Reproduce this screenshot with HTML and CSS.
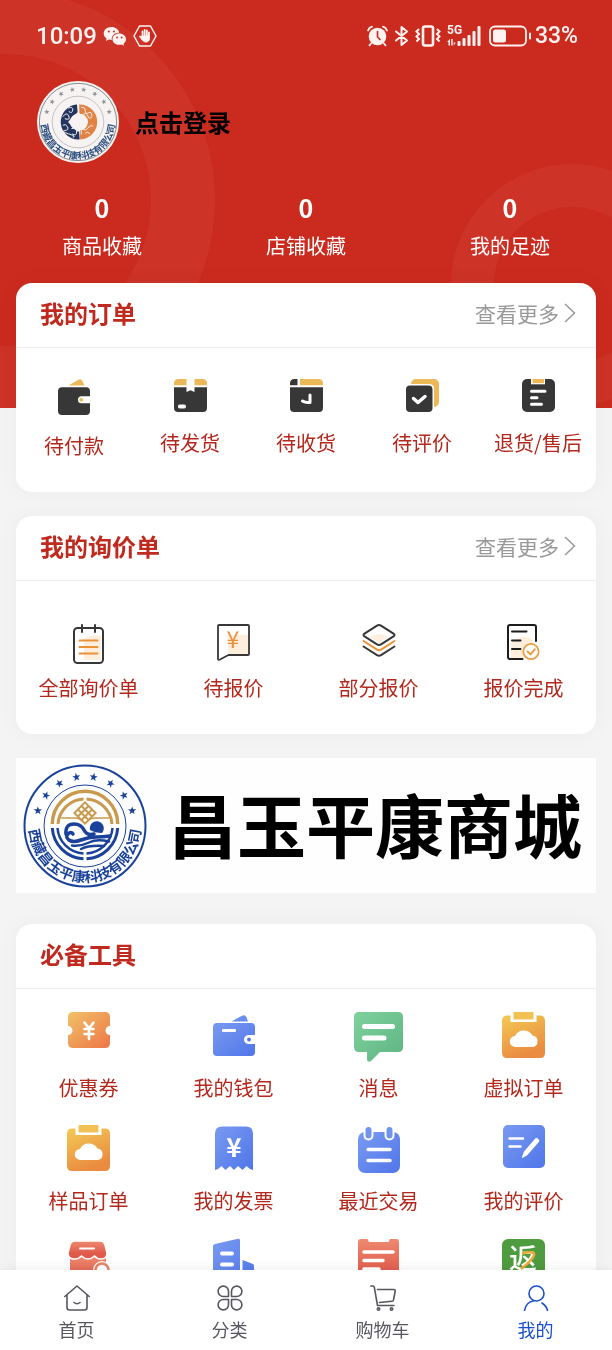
FILE: index.html
```html
<!DOCTYPE html>
<html lang="zh-CN">
<head>
    <meta charset="UTF-8">
    <meta name="viewport" content="width=device-width, initial-scale=1.0">
    <title>我的</title>
    <link rel="stylesheet" href="styles.css">
</head>
<body>
    <!-- Shared gradients and shapes -->
    <svg class="defs" aria-hidden="true">
        <defs>
            <linearGradient id="orange" x1="0" y1="0" x2="1" y2="1"><stop offset="0" stop-color="#f0c268"/><stop offset="1" stop-color="#ee7546"/></linearGradient>
            <linearGradient id="yellow" x1="0" y1="0" x2="0.4" y2="1"><stop offset="0" stop-color="#f3ca55"/><stop offset="1" stop-color="#ea8b40"/></linearGradient>
            <linearGradient id="blue" x1="0" y1="0" x2="1" y2="1"><stop offset="0" stop-color="#7a9af0"/><stop offset="1" stop-color="#4f76ea"/></linearGradient>
            <linearGradient id="green" x1="0" y1="0" x2="1" y2="1"><stop offset="0" stop-color="#7fd19c"/><stop offset="1" stop-color="#5db583"/></linearGradient>
            <linearGradient id="red" x1="0" y1="0" x2="0" y2="1"><stop offset="0" stop-color="#ee8a70"/><stop offset="0.7" stop-color="#e05a4c"/></linearGradient>
            <path id="seal-arc" d="M-56 0A56 56 0 0 0 56 0"/>
            <path id="star" d="M0-54L1-51 4-50.900 1.600-49 2.500-46 0-47.800-2.500-46-1.600-49-4-50.900-1-51Z"/>
            <g id="stars">
                <use href="#star" transform="rotate(-72)"/>
                <use href="#star" transform="rotate(-52)"/>
                <use href="#star" transform="rotate(-31)"/>
                <use href="#star" transform="rotate(-10)"/>
                <use href="#star" transform="rotate(10)"/>
                <use href="#star" transform="rotate(31)"/>
                <use href="#star" transform="rotate(52)"/>
                <use href="#star" transform="rotate(72)"/>
            </g>
        </defs>
    </svg>

    <main class="page">
        <div class="page-bg"></div>

        <div class="status-bar">
            <div class="status-left">
                <span>10:09</span>
                <svg width="24" height="20" viewBox="0 0 24 20">
                    <path fill="#fff3f1" d="M8.500 1C4 1 .7 3.900.7 7.500c0 2 1.100 3.800 2.900 5L3 15l2.800-1.500c1 .3 2 .4 3 .4-.5-4 2.700-7.300 7.400-7.200C15.600 3.300 12.300 1 8.500 1z"/>
                    <path fill="#fff3f1" d="M16.300 7.500c-3.900 0-6.800 2.500-6.800 5.700s3 5.600 6.800 5.600c.8 0 1.600-.1 2.300-.3l2.500 1.300-.6-2.100c1.500-1.100 2.500-2.700 2.500-4.500 0-3.200-3-5.700-6.700-5.700z"/>
                    <g fill="#cb2b1e"><circle cx="5.800" cy="5.500" r="1"/><circle cx="11" cy="5.500" r="1"/><circle cx="14" cy="11.500" r=".9"/><circle cx="18.600" cy="11.500" r=".9"/></g>
                </svg>
                <svg width="24" height="22" viewBox="0 0 24 22" fill="none" stroke="#fff3f1" stroke-linecap="round" stroke-linejoin="round">
                    <path stroke-width="1.500" d="M6.500 1h11L23 11l-5.500 10h-11L1 11z"/>
                    <path stroke-width="1.800" d="M9.500 12V6.500M11.700 11V5M13.900 11V5.500M16 12V7.500M9.500 14.500L7 11.500"/>
                    <path fill="#fff3f1" stroke-width="1" d="M9 11h7.500v2.500c0 2-1.300 3.500-3.500 3.500-2 0-3-1-4-2.500z"/>
                </svg>
            </div>
            <div class="status-right">
                <svg width="21" height="22" viewBox="0 0 21 22" fill="none" stroke="#fff3f1" stroke-linecap="round">
                    <circle cx="10.500" cy="11.500" r="8.800" fill="#fff3f1" stroke="none"/>
                    <path stroke-width="1.800" d="M1 5.500Q2 2.500 5 1.700M20 5.500Q19 2.500 16 1.700M4 18.500l-1.500 1.800M17 18.500l1.500 1.800"/>
                    <path stroke="#cb2b1e" stroke-width="1.700" d="M10.500 6.500v5.500l2.500 2.500"/>
                </svg>
                <svg width="15" height="22" viewBox="0 0 15 22" fill="none" stroke="#fff3f1" stroke-width="2" stroke-linejoin="round" stroke-linecap="round">
                    <path d="M2 6.500l11 9-5.500 4.500V2L13 6.500l-11 9"/>
                </svg>
                <svg width="26" height="22" viewBox="0 0 26 22" fill="none" stroke="#fff3f1" stroke-width="2">
                    <rect x="8" y="1.500" width="10" height="19" rx="2" stroke-width="2.600"/>
                    <path stroke-width="2" d="M4 4L1.500 6.500 4 9 1.500 11.500 4 14l-2.500 2.500M22 4l2.500 2.500L22 9l2.500 2.500L22 14l2.500 2.500"/>
                </svg>
                <svg width="35" height="22" viewBox="0 0 35 22" fill="#fff3f1">
                    <text class="network" x="0" y="9">5G</text>
                    <path d="M3 14v6.500H1.500V17H0zM4.200 20.500V14h1.500v6.500zM6.700 14v3.500h2l-2 3z"/>
                    <rect x="10.500" y="16" width="3" height="5" rx="1"/><rect x="15.500" y="13" width="3" height="8" rx="1"/><rect x="20.500" y="10" width="3" height="11" rx="1"/><rect x="25.500" y="6" width="3" height="15" rx="1"/><rect x="30.500" y="1" width="3" height="20" rx="1"/>
                </svg>
                <svg width="44" height="22" viewBox="0 0 44 22" fill="none" stroke="#fff3f1">
                    <rect x="2" y="1.500" width="36" height="19" rx="5" stroke-width="1.800"/>
                    <rect x="5" y="4.500" width="13" height="13" rx="2.500" fill="#fff3f1" stroke="none"/>
                    <path stroke-width="2" stroke-linecap="round" d="M42 8.500v5"/>
                </svg>
                <span>33%</span>
            </div>
        </div>

        <a class="profile" href="#">
            <svg class="avatar" viewBox="-62 -62 124 124">
                <circle r="62" fill="#f6f3f2"/>
                <circle r="58.500" fill="none" stroke="#85888b" stroke-width="1.500"/>
                <circle r="39" fill="none" stroke="#a9acaf"/>
                <use href="#stars" fill="#8f9499"/>
                <text class="seal-text avatar-text"><textPath href="#seal-arc" startOffset="50%">西藏昌玉平康科技有限公司</textPath></text>
                <g fill="none" stroke-width="14">
                    <path stroke="#24365f" d="M2 19.500A19.500 19.500 0 0 1-1-19.500"/>
                    <path stroke="#e08344" d="M2-19.500A19.500 19.500 0 0 1 3 19.500"/>
                </g>
                <path fill="#f6f3f2" d="M0-15L6-9 15 0 9 6 0 15-8 8-15 0-9-7z"/>
                <path fill="none" stroke="#f0efee" stroke-width="1.500" d="M-23-8q6-8 9-1t-6 4M-15-21q8-3 7 3t-6 2M-23 5q4-3 7 2t-4 6 6 5 6 5M-10 10q8-2 8 5t-7 3M5-22q6-1 6 5t5 3 5 6M8-12q6-2 7 3t6 2M23 6q-5-2-8 3t-7 2-3 8M18 18q-4-5-7-1"/>
            </svg>
            <span class="profile-name">点击登录</span>
        </a>

        <div class="stats">
            <a class="stat" href="#"><strong>0</strong><span>商品收藏</span></a>
            <a class="stat" href="#"><strong>0</strong><span>店铺收藏</span></a>
            <a class="stat" href="#"><strong>0</strong><span>我的足迹</span></a>
        </div>

        <!-- Orders -->
        <section class="card">
            <div class="card-header">
                <h2>我的订单</h2>
                <a class="more" href="#">查看更多
                    <svg width="12" height="22" viewBox="0 0 12 22" fill="none" stroke="#999" stroke-width="1.500"><path d="M1 2l9.500 9L1 20"/></svg>
                </a>
            </div>
            <div class="order-list">
                <a class="item" href="#">
                    <svg width="33" height="36" viewBox="0 0 33 36">
                        <path fill="#edb857" d="M10.500 6.500L20 .9q3-1.800 4.500 1l2 4.600z"/>
                        <path fill="#373737" d="M4 8.300h24q4 0 4 4v5h-8.500a3.500 3.500 0 0 0 0 7H32V32q0 4-4 4H4q-4 0-4-4V12.300q0-4 4-4z"/>
                        <circle cx="23.200" cy="20.800" r="1.900" fill="#edb857"/>
                    </svg>
                    <span>待付款</span>
                </a>
                <a class="item" href="#">
                    <svg width="33" height="33" viewBox="0 0 33 33">
                        <path fill="#edb857" d="M0 6.300V4.500Q0 0 4.500 0h8v6.300zM20.500 0h8Q33 0 33 4.500v1.800H20.500z"/>
                        <path fill="#373737" d="M0 8.200h12.500V13l4-1.800 4 1.800V8.200H33V29q0 4-4 4H4q-4 0-4-4z"/>
                        <rect x="4" y="25.500" width="8" height="4" rx="1.800" fill="#fff"/>
                    </svg>
                    <span>待发货</span>
                </a>
                <a class="item" href="#">
                    <svg width="33" height="33" viewBox="0 0 33 33">
                        <path fill="#373737" d="M0 6.300V4.500Q0 0 4.500 0H7.500v6.300zM0 8.200h33V29q0 4-4 4H4q-4 0-4-4z"/>
                        <path fill="#edb857" d="M10 0h18.500Q33 0 33 4.500v1.800H10z"/>
                        <path fill="none" stroke="#fff" stroke-width="3" stroke-linecap="round" stroke-linejoin="round" d="M12.500 22q2 1.500 7.500 1.500V16"/>
                    </svg>
                    <span>待收货</span>
                </a>
                <a class="item" href="#">
                    <svg width="33" height="33" viewBox="0 0 33 33">
                        <rect x="5" width="28" height="28" rx="5" fill="#edb857"/>
                        <path fill="#fff" d="M-1 5h24q5 0 5 5v24H-1z"/>
                        <rect y="6.500" width="26.500" height="26.500" rx="4" fill="#373737"/>
                        <path fill="none" stroke="#fff" stroke-width="3.500" stroke-linecap="round" stroke-linejoin="round" d="M7.500 19.500l4.500 4 7-6"/>
                    </svg>
                    <span>待评价</span>
                </a>
                <a class="item" href="#">
                    <svg width="33" height="33" viewBox="0 0 33 33">
                        <rect width="33" height="33" rx="5" fill="#373737"/>
                        <path fill="#fff" d="M9 0h14v5.300H9z"/>
                        <path fill="#edb857" d="M10.500 0h11.500v4.200H10.500z"/>
                        <path fill="none" stroke="#fff" stroke-width="3" stroke-linecap="round" d="M9.500 12.300H23M9.500 18.800H15M9.500 25.300H19.500"/>
                    </svg>
                    <span>退货/售后</span>
                </a>
            </div>
        </section>

        <!-- Inquiries -->
        <section class="card">
            <div class="card-header">
                <h2>我的询价单</h2>
                <a class="more" href="#">查看更多
                    <svg width="12" height="22" viewBox="0 0 12 22" fill="none" stroke="#999" stroke-width="1.500"><path d="M1 2l9.500 9L1 20"/></svg>
                </a>
            </div>
            <div class="inquiry-list">
                <a class="item" href="#">
                    <svg width="31" height="40" viewBox="0 0 31 40" fill="none" stroke="#373737" stroke-width="2" stroke-linecap="round">
                        <path fill="#fdeedd" stroke="none" d="M11 15q6-5 17-3v24H11z"/>
                        <rect x="1" y="4" width="29" height="35" rx="3.500"/>
                        <path d="M9 1v7M22 1v7"/>
                        <path stroke="#eb9138" d="M6.500 16.500h18M6.500 23h18M6.500 29.500h18"/>
                    </svg>
                    <span>全部询价单</span>
                </a>
                <a class="item" href="#">
                    <svg width="33" height="40" viewBox="0 0 33 40">
                        <path fill="#fdeedd" d="M11 11h20v20H11z"/>
                        <path fill="none" stroke="#373737" stroke-width="1.800" stroke-linejoin="round" d="M2 1h29q1 0 1 1v28q0 1-1 1H11.500L3 35.500q-2 1-2-1V2q0-1 1-1z"/>
                        <text class="yen yen-orange" x="16" y="24">¥</text>
                    </svg>
                    <span>待报价</span>
                </a>
                <a class="item" href="#">
                    <svg width="34" height="40" viewBox="0 0 34 40" fill="none" stroke="#373737" stroke-width="2" stroke-linecap="round" stroke-linejoin="round">
                        <path fill="#fdeedd" stroke="none" d="M8 13q8-6 18 0l-9 6z"/>
                        <path d="M15 1.700q2-1.200 4 0l12.500 8q2 1.300 0 2.600l-12.500 8q-2 1.200-4 0l-12.500-8q-2-1.300 0-2.600z"/>
                        <path stroke="#eb9138" d="M1.500 17L15 25.700q2 1.200 4 0L32.500 17"/>
                        <path d="M1.500 22.500L15 31.200q2 1.200 4 0l13.500-8.700"/>
                    </svg>
                    <span>部分报价</span>
                </a>
                <a class="item" href="#">
                    <svg width="33" height="40" viewBox="0 0 33 40" fill="none" stroke="#1d1d1d" stroke-width="2" stroke-linecap="round">
                        <path fill="#fdeedd" stroke="none" d="M4 20q10-12 22-4v18H4z"/>
                        <path d="M15.500 35H3q-2 0-2-2V3q0-2 2-2h24q2 0 2 2v14M5 7.500h14.500M5 16.500h8.500M5 25h8.500"/>
                        <circle cx="24" cy="27.500" r="7.700" fill="#fff" stroke="#eb9c42" stroke-width="1.700"/>
                        <path stroke="#eb9c42" d="M20.500 27.500l3 2.800 4.300-5"/>
                    </svg>
                    <span>报价完成</span>
                </a>
            </div>
        </section>

        <a class="banner" href="#">
            <svg class="seal" viewBox="-62 -62 124 124">
                <g fill="none" stroke="#1b429a">
                    <circle r="60.500" stroke-width="2"/>
                    <circle r="41"/>
                </g>
                <use href="#stars" fill="#1b429a"/>
                <text class="seal-text"><textPath href="#seal-arc" startOffset="50%">西藏昌玉平康科技有限公司</textPath></text>
                <g fill="none" stroke="#c99a4e">
                    <path stroke-width="3.500" d="M-32.700-2A32.700 32.700 0 0 1 32.700-2"/>
                    <path stroke-width="3" d="M-27-2A27 27 0 0 1-1.500-27M1.500-27A27 27 0 0 1 27-2"/>
                    <path stroke-width="1.500" d="M-24-8h14q5 0 7 3M24-8H10Q5-8 3-5"/>
                    <g stroke-width="2" transform="translate(0 -13) rotate(45)">
                        <path d="M-7.500-7.500h15v15h-15zM-2.500-7.500v15M2.500-7.500v15M-7.500-2.500h15M-7.500 2.500h15"/>
                    </g>
                </g>
                <g fill="none" stroke="#1b429a">
                    <path stroke-width="3" d="M-32.700 2A32.700 32.700 0 0 0-1.500 32.700M1.500 32.700A32.700 32.700 0 0 0 32.700 2"/>
                    <path stroke-width="2.500" d="M-27.500 2A27.500 27.500 0 0 0-1.500 27.500M1.500 27.500A27.500 27.500 0 0 0 27.500 2"/>
                    <path stroke-width="3.500" stroke-linecap="round" d="M-12 8q-2-3-5 0t1 6 12 0 15-3 14-1"/>
                    <path stroke-width="3.500" stroke-linecap="round" d="M-19 8q-1-10 8-10 7 0 10 6t10 4"/>
                    <path stroke-width="2.500" stroke-linecap="round" d="M-13 19.500q9 1 17-3t20-1M-4 23q8-4 23-3"/>
                </g>
                <path fill="#1b429a" d="M5 4a7 7 0 1 1 12 3q-7 0-12-3z"/>
            </svg>
            <strong>昌玉平康商城</strong>
        </a>

        <!-- Tools -->
        <section class="card">
            <div class="card-header">
                <h2>必备工具</h2>
            </div>
            <div class="tool-list">
                <a class="item" href="#">
                    <svg width="42" height="50" viewBox="0 0 42 50">
                        <path fill="url(#orange)" d="M5 0h32q5 0 5 5v9a4.500 4.500 0 0 0 0 9v8q0 5-5 5H5q-5 0-5-5v-8a4.500 4.500 0 0 0 0-9V5q0-5 5-5z"/>
                        <path fill="none" stroke="#fff" stroke-width="2.600" stroke-linecap="round" d="M16.500 10.500l4.500 6 4.500-6M21 16.500V27M16.500 17h9M16.500 22h9"/>
                    </svg>
                    <span>优惠券</span>
                </a>
                <a class="item" href="#">
                    <svg width="42" height="50" viewBox="0 0 42 50">
                        <path fill="#6a8eee" d="M18.500 9.500L29 3.700q3-1.400 4.500 1.500l1.500 4.300z"/>
                        <path fill="url(#blue)" d="M4 11h34q4 0 4 4v8h-6.500a4.500 4.500 0 0 0 0 9H42v8q0 4-4 4H4q-4 0-4-4V15q0-4 4-4z"/>
                        <rect x="9" y="17" width="14" height="3" rx="1" fill="#fff"/>
                        <circle cx="36" cy="27.500" r="1.900" fill="#5077ea"/>
                    </svg>
                    <span>我的钱包</span>
                </a>
                <a class="item" href="#">
                    <svg width="49" height="50" viewBox="0 0 49 50">
                        <path fill="url(#green)" d="M5 0h39q5 0 5 5v30q0 5-5 5H26L17 49q-3 2-4-1v-8H5q-5 0-5-5V5q0-5 5-5z"/>
                        <path stroke="#fff" stroke-width="5" stroke-linecap="round" d="M10.500 14.500H38.500M10.500 26H30"/>
                    </svg>
                    <span>消息</span>
                </a>
                <a class="item" href="#">
                    <svg width="43" height="50" viewBox="0 0 43 50">
                        <path fill="url(#yellow)" d="M5 3.500h3.500V10h26V3.500H38q5 0 5 5V41q0 5-5 5H5q-5 0-5-5V8.500q0-5 5-5z"/>
                        <rect x="11.500" width="20" height="7.500" rx="1" fill="#f1c153"/>
                        <path fill="#fff" d="M13.500 35a5.500 5.500 0 0 1-.5-11q2.500-5.500 8.500-5.500t9 5a5.800 5.800 0 0 1 0 11.500z"/>
                    </svg>
                    <span>虚拟订单</span>
                </a>
                <a class="item" href="#">
                    <svg width="43" height="50" viewBox="0 0 43 50">
                        <path fill="url(#yellow)" d="M5 3.500h3.500V10h26V3.500H38q5 0 5 5V41q0 5-5 5H5q-5 0-5-5V8.500q0-5 5-5z"/>
                        <rect x="11.500" width="20" height="7.500" rx="1" fill="#f1c153"/>
                        <path fill="#fff" d="M13.500 35a5.500 5.500 0 0 1-.5-11q2.500-5.500 8.500-5.500t9 5a5.800 5.800 0 0 1 0 11.500z"/>
                    </svg>
                    <span>样品订单</span>
                </a>
                <a class="item" href="#">
                    <svg width="38" height="50" viewBox="0 0 38 50">
                        <path fill="url(#blue)" d="M7 1.500h24q7 0 7 7V45l-3-1-3.500-3-4 4-4.500-4-4 4-4-4-4.500 4L6.500 41 3 44l-3 1V8.500q0-7 7-7z"/>
                        <text class="yen yen-white" x="19" y="32">¥</text>
                    </svg>
                    <span>我的发票</span>
                </a>
                <a class="item" href="#">
                    <svg width="42" height="50" viewBox="0 0 42 50">
                        <rect y="7" width="42" height="41" rx="7" fill="url(#blue)"/>
                        <rect x="6.500" y="1" width="8" height="13.500" rx="4" fill="#7194ef" stroke="#fff" stroke-width="2"/>
                        <rect x="27.500" y="1" width="8" height="13.500" rx="4" fill="#7194ef" stroke="#fff" stroke-width="2"/>
                        <path stroke="#fff" stroke-width="3.500" stroke-linecap="round" d="M10 24.500h22M10 35.500h22"/>
                    </svg>
                    <span>最近交易</span>
                </a>
                <a class="item" href="#">
                    <svg width="42" height="50" viewBox="0 0 42 50">
                        <rect width="42" height="43" rx="5" fill="url(#blue)"/>
                        <path stroke="#fff" stroke-width="2.500" stroke-linecap="round" d="M6.500 13.500H20M6.500 21.500H17.500"/>
                        <path fill="#fff" d="M32.500 13.200q1-.8 2 0l1.500 1.500q.8 1 0 2L24.500 30 19.500 33q-.8-.3-.5-1l2-5.500z"/>
                    </svg>
                    <span>我的评价</span>
                </a>
                <a class="item" href="#">
                    <svg width="42" height="50" viewBox="0 0 42 50">
                        <path fill="url(#red)" d="M2 19h36v30H2z"/>
                        <path fill="url(#red)" stroke="#fff" stroke-width="1.500" d="M7 3h25q4 0 5 4l2 8q0 6-6 6-4 0-6.500-3-3 3-6.500 3t-6.500-3q-3 3-7 3-6.500 0-6.500-6l2-8q1-4 5-4z"/>
                        <path stroke="#fff" stroke-width="2" stroke-linecap="round" d="M12 10.500h14"/>
                        <circle cx="34" cy="32" r="6.500" fill="#fff" stroke="#fff" stroke-width="5"/>
                        <circle cx="34" cy="32" r="6.500" fill="none" stroke="#e88262" stroke-width="2.500"/>
                    </svg>
                </a>
                <a class="item" href="#">
                    <svg width="42" height="50" viewBox="0 0 42 50">
                        <path fill="url(#blue)" d="M2 6L25 .7q2-.4 2 1.600V49H0V8q0-1.600 2-2zM29.500 22l10.500 4q1 .5 1 2v21H29.500z"/>
                        <path stroke="#fff" stroke-width="4" stroke-linecap="round" d="M9 15.500h10M9 26.500h10"/>
                    </svg>
                </a>
                <a class="item" href="#">
                    <svg width="42" height="50" viewBox="0 0 42 50">
                        <path fill="url(#red)" d="M3 1h6.500l1.500 3h19.500L32 1h6.500q2.500 0 2.500 3v45H0V4q0-3 3-3z"/>
                        <path stroke="#fff" stroke-width="3.500" stroke-linecap="round" d="M6 14h29M6 22.500h19M6 31h15"/>
                    </svg>
                </a>
                <a class="item" href="#">
                    <svg width="43" height="50" viewBox="0 0 43 50">
                        <rect y="1" width="43" height="43" rx="6" fill="#4f9b3f"/>
                        <text class="rebate" x="21" y="31">返</text>
                        <path fill="none" stroke="#edaa3c" stroke-width="2.600" d="M20 15.500q13-3 12 1.500t-13 14"/>
                    </svg>
                </a>
            </div>
        </section>
    </main>

    <nav class="tab-bar">
        <a class="tab" href="#">
            <svg viewBox="0 0 26 26"><path d="M3 9.500V22.500Q3 25 5.500 25h15q2.500 0 2.500-2.500V9.500M.8 11.500L13 1l12.200 10.500M10 17.500q3 2.500 6 0"/></svg>
            <span>首页</span>
        </a>
        <a class="tab" href="#">
            <svg viewBox="0 0 26 26"><path d="M11.500 11.500H6.300A5.200 5.200 0 1 1 11.500 6.300zM14.500 11.500V6.300A5.200 5.200 0 1 1 19.700 11.500zM11.500 14.500V19.700A5.200 5.200 0 1 1 6.300 14.500zM14.500 14.500H19.700A5.200 5.200 0 1 1 14.500 19.700z"/></svg>
            <span>分类</span>
        </a>
        <a class="tab" href="#">
            <svg viewBox="0 0 26 26"><path d="M.8 1H3q1 0 1.300 1.200L7.500 20.500H24M7.500 4.500H24q1.500 0 1.200 1.500L23.500 15q-.2 1.300-1.500 1.300L9.500 17.500"/><circle cx="8.500" cy="24" r="1.200"/><circle cx="21.500" cy="24" r="1.200"/></svg>
            <span>购物车</span>
        </a>
        <a class="tab active" href="#">
            <svg viewBox="0 0 26 26"><circle cx="13.500" cy="8.500" r="7.500"/><path d="M1.500 25.500Q3 17 11 15.800M19 18q4.500 3 5.500 7.500"/></svg>
            <span>我的</span>
        </a>
    </nav>
</body>
</html>
```
FILE: styles.css
```css
/* General styling */
*,
*::before,
*::after {
    box-sizing: border-box;
}

body {
    margin: 0;
    height: 100vh;
    display: flex;
    flex-direction: column;
    background-color: #f4f4f4;
    font-family: "Noto Sans CJK SC", sans-serif;
    font-size: 20px;
    line-height: 28px;
}

a {
    color: inherit;
    text-decoration: none;
}

svg {
    display: block;
    flex-shrink: 0;
}

.defs {
    position: absolute;
    width: 0;
    height: 0;
}

.page {
    position: relative;
    flex: 1;
    min-height: 0;
    overflow-x: hidden;
    overflow-y: auto;
    scrollbar-width: none;
}

/* Red background with the two rings */
.page-bg {
    position: absolute;
    top: 0;
    left: 0;
    right: 0;
    height: 408px;
    background-color: #cb2b1e;
    overflow: hidden;
    z-index: -1;
}

.page-bg::before,
.page-bg::after {
    content: "";
    position: absolute;
    border-radius: 50%;
    border-style: solid;
    border-color: rgba(255, 255, 255, 0.04);
}

.page-bg::before {
    width: 420px;
    height: 420px;
    left: -205px;
    top: -10px;
    border-width: 64px;
}

.page-bg::after {
    width: 242px;
    height: 242px;
    right: -81px;
    top: 164px;
    border-width: 43px;
}

/* Status bar */
.status-bar {
    display: flex;
    justify-content: space-between;
    height: 72px;
    padding: 0 34px 0 36px;
    color: #fff3f1;
    font-family: Roboto, sans-serif;
    font-size: 24px;
    font-weight: 500;
}

.status-left,
.status-right {
    display: flex;
    align-items: center;
    gap: 6px;
}

.status-right {
    font-size: 23px;
}

.status-right span {
    margin-left: -3px;
}

.network {
    font-size: 12px;
    font-weight: 700;
}

/* Profile */
.profile {
    display: flex;
    align-items: center;
    gap: 16px;
    padding: 9px 37px 0;
}

.avatar {
    width: 82px;
    height: 82px;
}

.profile-name {
    color: #000;
    font-size: 24px;
    font-weight: 700;
}

.seal-text {
    font-size: 14px;
    font-weight: 700;
    fill: #1b429a;
    text-anchor: middle;
}

.avatar-text {
    fill: #294c7e;
}

.stats {
    display: flex;
    padding: 30px 0 23px;
    color: #fff;
}

.stat {
    flex: 1;
    display: flex;
    flex-direction: column;
    align-items: center;
    gap: 11px;
}

.stat strong {
    font-size: 25px;
}

/* Cards */
.card {
    margin: 0 16px 24px;
    background-color: #fff;
    border-radius: 16px;
    box-shadow: 0 0 24px rgba(0, 0, 0, 0.04);
}

.card-header {
    display: flex;
    justify-content: space-between;
    align-items: center;
    height: 65px;
    padding: 0 20px 4px 24px;
    border-bottom: 1px solid #ececec;
}

.card-header h2 {
    margin: 0;
    color: #c02a1e;
    font-size: 24px;
    font-weight: 700;
}

.more {
    display: flex;
    align-items: center;
    gap: 5px;
    color: #999;
    font-size: 21px;
}

.order-list {
    display: grid;
    grid-template-columns: repeat(5, 1fr);
    padding: 31px 0 32px;
}

.inquiry-list,
.tool-list {
    display: grid;
    grid-template-columns: repeat(4, 1fr);
}

.inquiry-list {
    padding: 43px 0 32px;
}

.tool-list {
    padding: 23px 0;
    row-gap: 23px;
}

.item {
    display: flex;
    flex-direction: column;
    align-items: center;
    color: #b3281d;
    white-space: nowrap;
}

.order-list .item {
    gap: 17px;
}

.inquiry-list .item {
    gap: 10px;
}

.tool-list .item {
    gap: 12px;
}

.yen {
    text-anchor: middle;
}

.yen-orange {
    font-size: 23px;
    fill: #eb9138;
}

.yen-white {
    font-size: 26px;
    font-weight: 700;
    fill: #fff;
}

.rebate {
    font-size: 28px;
    font-weight: 500;
    fill: #fff;
    text-anchor: middle;
}

/* Banner */
.banner {
    display: flex;
    align-items: center;
    justify-content: space-between;
    height: 135px;
    margin: 0 16px 31px;
    padding: 0 14px 0 7px;
    background-color: #fdfefd;
    color: #000;
}

.seal {
    width: 124px;
    height: 124px;
}

.banner strong {
    font-size: 69px;
    font-weight: 700;
    line-height: 100px;
    padding-bottom: 6px;
    white-space: nowrap;
}

/* Bottom tab bar */
.tab-bar {
    position: relative;
    display: flex;
    height: 80px;
    padding-top: 15px;
    background-color: #fff;
    box-shadow: 0 0 12px rgba(0, 0, 0, 0.08);
}

.tab {
    flex: 1;
    display: flex;
    flex-direction: column;
    align-items: center;
    gap: 5px;
    color: #56565f;
    font-size: 18px;
    line-height: 26px;
}

.tab svg {
    width: 26px;
    height: 26px;
    fill: none;
    stroke: currentColor;
    stroke-width: 1.6;
    stroke-linejoin: round;
    stroke-linecap: round;
}

.tab.active {
    color: #1a4fcb;
}
```
